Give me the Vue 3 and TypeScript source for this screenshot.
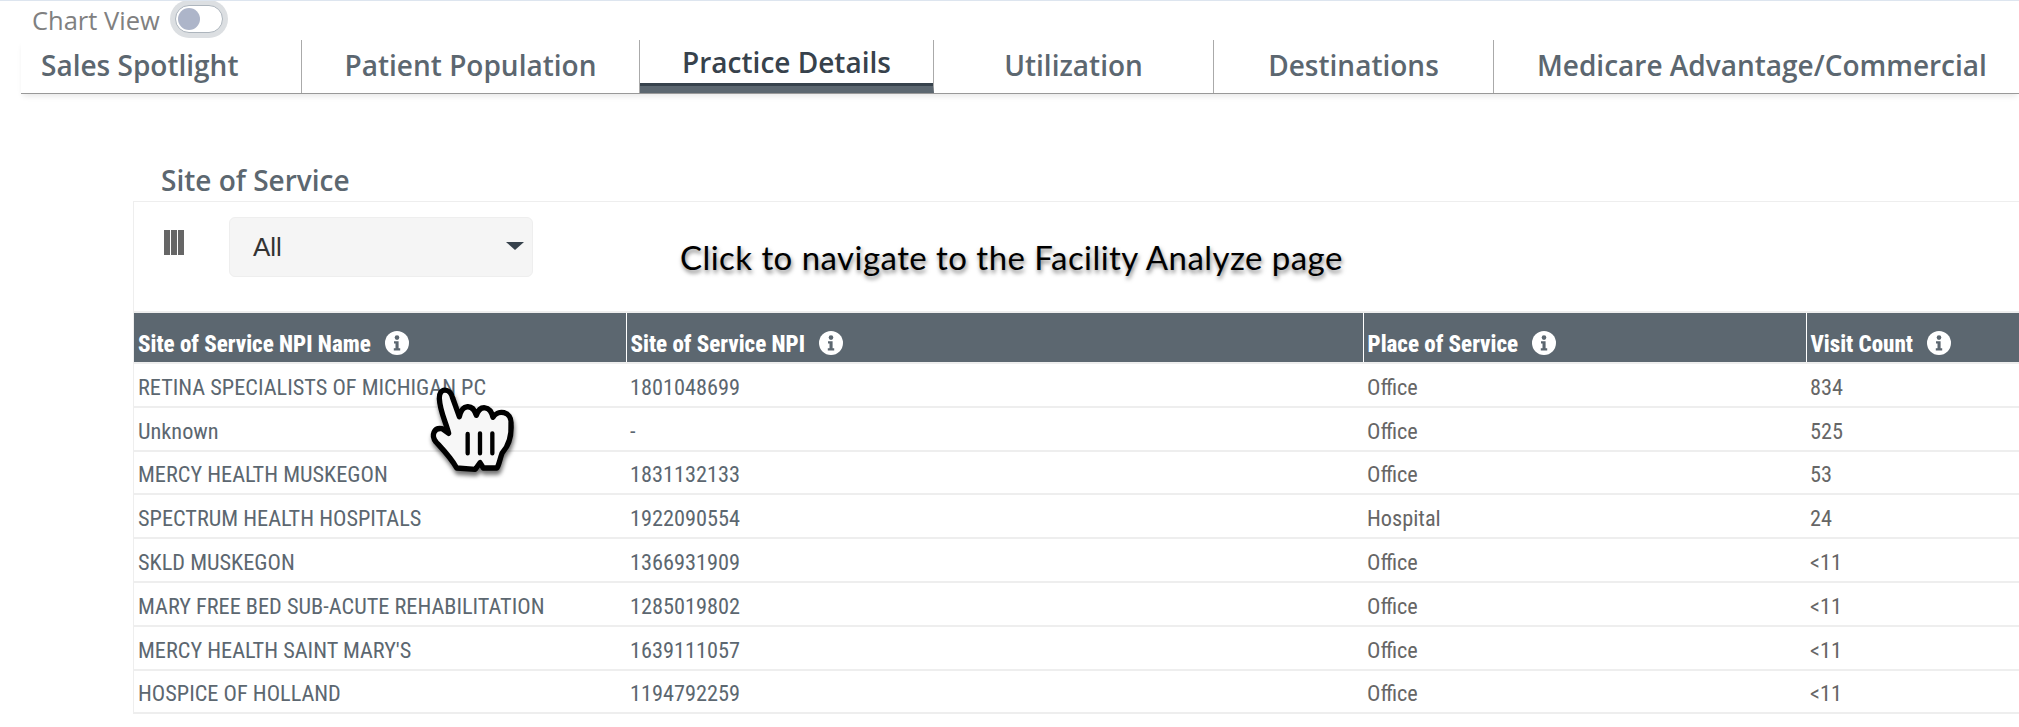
<script setup lang="ts">
interface Row { name: string; npi: string; place: string; visits: string }

const tabs: string[] = [
  'Sales Spotlight',
  'Patient Population',
  'Practice Details',
  'Utilization',
  'Destinations',
  'Medicare Advantage/Commercial',
]
const activeTab = 'Practice Details'
const headers: string[] = ['Site of Service NPI Name', 'Site of Service NPI', 'Place of Service', 'Visit Count']
const rows: Row[] = [
  { name: 'RETINA SPECIALISTS OF MICHIGAN PC', npi: '1801048699', place: 'Office', visits: '834' },
  { name: 'Unknown', npi: '-', place: 'Office', visits: '525' },
  { name: 'MERCY HEALTH MUSKEGON', npi: '1831132133', place: 'Office', visits: '53' },
  { name: 'SPECTRUM HEALTH HOSPITALS', npi: '1922090554', place: 'Hospital', visits: '24' },
  { name: 'SKLD MUSKEGON', npi: '1366931909', place: 'Office', visits: '<11' },
  { name: 'MARY FREE BED SUB-ACUTE REHABILITATION', npi: '1285019802', place: 'Office', visits: '<11' },
  { name: "MERCY HEALTH SAINT MARY'S", npi: '1639111057', place: 'Office', visits: '<11' },
  { name: 'HOSPICE OF HOLLAND', npi: '1194792259', place: 'Office', visits: '<11' },
]
</script>

<template>
  <div class="page">
    <div class="chart-view">
      <span class="chart-label">Chart View</span>
      <span class="toggle"><span class="knob"></span></span>
    </div>

    <nav class="tabs">
      <div v-for="t in tabs" :key="t" class="tab" :class="{ active: t === activeTab }">{{ t }}</div>
    </nav>

    <h2 class="section-title">Site of Service</h2>

    <section class="panel">
      <div class="toolbar">
        <svg class="columns-icon" viewBox="0 0 20 25" width="20" height="25">
          <rect x="0" y="0" width="6" height="25" />
          <rect x="7" y="0" width="6" height="25" />
          <rect x="14" y="0" width="6" height="25" />
        </svg>
        <div class="select">
          <span>All</span>
          <span class="caret"></span>
        </div>
        <div class="hint">Click to navigate to the Facility Analyze page</div>
      </div>

      <table class="grid">
        <colgroup>
          <col class="c1" />
          <col class="c2" />
          <col class="c3" />
          <col />
        </colgroup>
        <thead>
          <tr>
            <th v-for="h in headers" :key="h">
              <span class="th-inner">
                <span class="th-text">{{ h }}</span>
                <svg class="info" viewBox="0 0 24 24" width="24" height="24">
                  <circle cx="12" cy="12" r="12" fill="#fff" />
                  <circle cx="12" cy="6.6" r="2.3" fill="#5c6770" />
                  <path d="M9 10.2h4.6v7h1.6v2.2H8.8v-2.2h1.7v-4.8H9z" fill="#5c6770" />
                </svg>
              </span>
            </th>
          </tr>
        </thead>
        <tbody>
          <tr v-for="r in rows" :key="r.name">
            <td class="slate">{{ r.name }}</td>
            <td class="slate">{{ r.npi }}</td>
            <td>{{ r.place }}</td>
            <td>{{ r.visits }}</td>
          </tr>
        </tbody>
      </table>
    </section>

    <svg class="hand" viewBox="0 0 450 360" width="150" height="120">
      <defs>
        <filter id="hand-shadow" x="-20%" y="-20%" width="140%" height="140%">
          <feDropShadow dx="3" dy="12" stdDeviation="7" flood-color="#000" flood-opacity="0.55" />
        </filter>
      </defs>
      <path
        filter="url(#hand-shadow)"
        d="M118 86C116 52 150 52 158 84L178 140C186 102 218 100 229 136C240 104 270 106 279 142C292 118 336 122 333 162C335 192 327 226 306 250C300 266 297 284 291 294L250 294L240 278L226 298L170 294C152 262 130 240 108 216C92 196 102 172 126 176L146 190C136 152 120 124 118 86Z"
        fill="#f7f7f7"
        stroke="#000"
        stroke-width="16"
        stroke-linejoin="round"
      />
      <path d="M203 192V250M240 190V250M277 190V250" stroke="#000" stroke-width="13" stroke-linecap="round" fill="none" />
    </svg>
  </div>
</template>

<style>
html, body { margin: 0; padding: 0; overflow: hidden; background: #fff; }
</style>

<style scoped>
.page {
  position: relative;
  width: 2019px;
  height: 727px;
  overflow: hidden;
  background: #fff;
  box-sizing: border-box;
  border-top: 1px solid #dde5ef;
  font-family: "Open Sans", "Noto Sans", sans-serif;
}
.chart-view {
  display: flex;
  align-items: center;
  height: 39px;
  padding-left: 32px;
  gap: 15px;
}
.chart-label { font-size: 25.5px; color: #808080; line-height: 34px; margin-top: -2px; }
.toggle {
  display: flex;
  align-items: center;
  box-sizing: border-box;
  width: 48px;
  height: 28px;
  margin-top: -4px;
  padding: 0 2px;
  background: #fff;
  border: 1px solid #adb5bd;
  border-radius: 14px;
  box-shadow: 0 0 0 5px #dcdfe2;
}
.knob { width: 22px; height: 22px; border-radius: 50%; background: #adb5c9; }
.tabs {
  display: grid;
  grid-template-columns: 281px 338px 294px 280px 280px 1fr;
  margin-left: 21px;
  height: 54px;
  box-sizing: border-box;
  border-bottom: 1px solid #999;
  box-shadow: 0 4px 6px -2px rgba(0, 0, 0, 0.1);
}
.tab {
  box-sizing: border-box;
  height: 53px;
  border-right: 1px solid #aaa;
  text-align: center;
  font-size: 28px;
  font-weight: 600;
  line-height: 47px;
  color: #5c6770;
  white-space: nowrap;
  padding-top: 2px;
}
.tab:first-child { text-align: left; padding-left: 20px; }
.tab:last-child { text-align: left; padding-left: 43px; border-right: 0; }
.tab.active {
  color: #37424c;
  padding-top: 0;
  line-height: 45px;
  border-bottom: 7px solid #5c6770;
  box-shadow: inset 0 -3px 0 #37424c;
}
.section-title {
  margin: 0;
  height: 107px;
  box-sizing: border-box;
  padding: 68px 0 0 161px;
  font-size: 28px;
  line-height: 36px;
  font-weight: 600;
  color: #5c6770;
}
.panel {
  margin-left: 133px;
  border-left: 1px solid #eee;
  border-top: 1px solid #eee;
}
.toolbar {
  position: relative;
  display: flex;
  align-items: flex-start;
  height: 109px;
  box-sizing: border-box;
  padding: 15px 0 0 30px;
}
.columns-icon { fill: #666; margin-top: 13px; }
.select {
  display: flex;
  align-items: center;
  justify-content: space-between;
  box-sizing: border-box;
  width: 304px;
  height: 60px;
  margin-left: 45px;
  padding: 0 8px 0 23px;
  background: #f5f5f5;
  border: 1px solid #eee;
  border-radius: 6px;
  font-family: "Liberation Sans", sans-serif;
  font-size: 26px;
  color: #333;
}
.caret {
  width: 0;
  height: 0;
  margin-bottom: 3px;
  border-left: 9px solid transparent;
  border-right: 9px solid transparent;
  border-top: 8px solid #37424c;
}
.hint {
  position: absolute;
  left: 546px;
  top: 35px;
  white-space: nowrap;
  font-family: "Lato", "Liberation Sans", sans-serif;
  font-size: 33px;
  letter-spacing: 0.45px;
  line-height: 40px;
  color: #000;
  text-shadow: 1px 3px 4px rgba(0, 0, 0, 0.5);
}
.grid {
  width: 1885px;
  table-layout: fixed;
  border-collapse: collapse;
  font-family: "Roboto Condensed", "Roboto", sans-serif;
  font-stretch: 75%;
  border-top: 2px solid #eee;
}
.c1 { width: 492px; }
.c2 { width: 737px; }
.c3 { width: 443px; }
th {
  height: 38px;
  padding: 11px 0 0 4px;
  background: #5c6770;
  color: #fff;
  text-align: left;
  font-size: 23px;
  font-weight: 800;
  border-left: 1px solid #fff;
  border-bottom: 2px solid #eee;
}
th:first-child { border-left: 0; }
.th-inner { display: flex; align-items: center; gap: 14px; }
.th-text { padding-top: 1px; margin-bottom: -1px; }
.info { flex: none; }
td {
  height: 37.8px;
  padding: 4px 0 0 4px;
  font-size: 22.3px;
  color: #666;
  border-bottom: 2px solid #eee;
}
td.slate { color: #5c6770; }
.hand {
  position: absolute;
  left: 400px;
  top: 369px;
}
</style>
